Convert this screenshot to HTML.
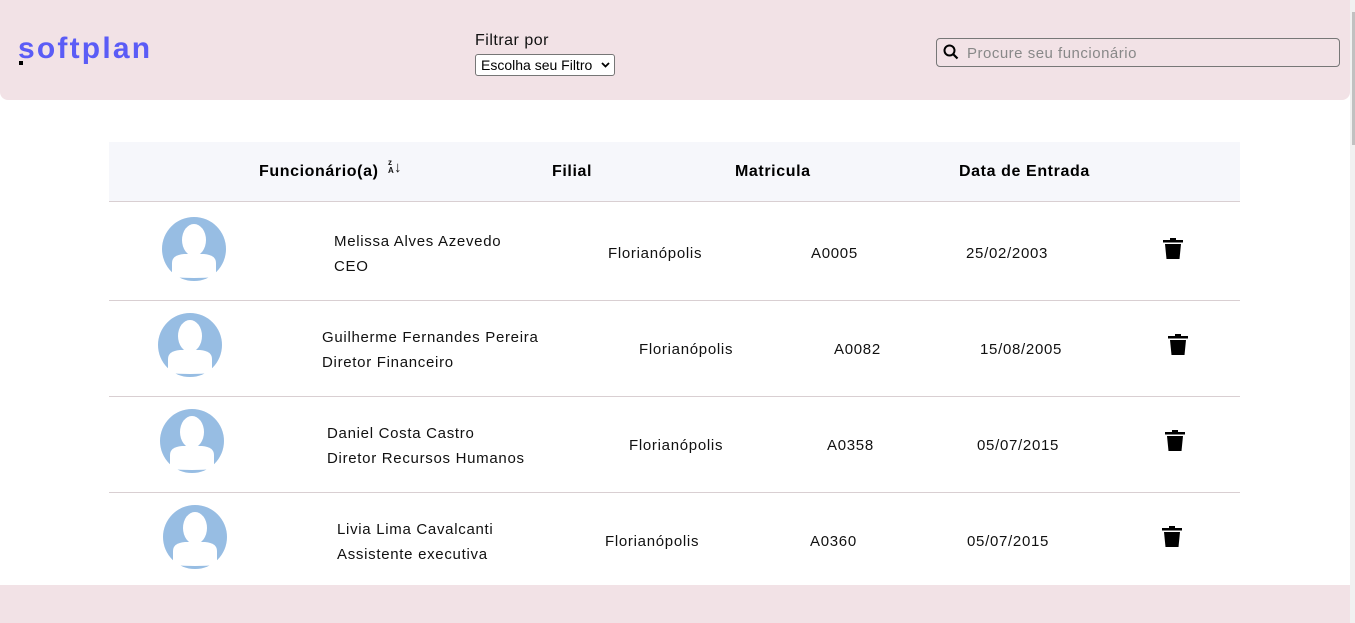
<!DOCTYPE html>
<html><head><meta charset="utf-8">
<style>
*{margin:0;padding:0;box-sizing:border-box}
body{width:1355px;height:623px;overflow:hidden;background:#fff;font-family:"Liberation Sans",Arial,sans-serif;position:relative;color:#111}
.a{position:absolute;white-space:nowrap}
.hdr{position:absolute;left:0;top:0;width:1350px;height:100px;background:#f2e2e6;border-radius:0 0 8px 8px}
.ftr{position:absolute;left:0;top:585px;width:1350px;height:38px;background:#f2e2e6}
.sb{position:absolute;left:1350px;top:0;width:5px;height:623px;background:#f1f1f1}
.th{position:absolute;left:1352px;top:12px;width:3px;height:133px;background:#c1c1c1}
.thead{position:absolute;left:109px;top:142px;width:1131px;height:60px;background:#f6f7fb;border-bottom:1px solid #d9cfd2}
.h{font-weight:bold;font-size:16px;top:163px;color:#000;letter-spacing:0.6px}
.line{position:absolute;left:109px;width:1131px;height:1px;background:#d9cfd2}
.t{font-size:15px;color:#111;letter-spacing:0.7px}
</style></head><body>
<div class="hdr"></div>
<div class="a" style="left:18px;top:32px;font-size:30px;font-weight:bold;color:#5b5cf6;letter-spacing:2.2px">softplan</div>
<div class="a" style="left:19px;top:61px;width:4px;height:4px;background:#000"></div>
<div class="a" style="left:475px;top:32px;font-size:16px;color:#111;letter-spacing:0.5px">Filtrar por</div>
<div class="a" style="left:475px;top:54px;width:140px;height:22px;background:#fff;border:1px solid #767676;border-radius:3px;font-size:14px;padding:2px 0 0 5px;color:#000">Escolha seu Filtro <svg style="position:absolute;right:4px;top:7px" width="9" height="6"><path d="M1 1l3.5 3.5L8 1" fill="none" stroke="#000" stroke-width="1.8"/></svg></div>
<div class="a" style="left:936px;top:38px;width:404px;height:29px;border:1px solid #777;border-radius:4px"></div>
<svg class="a" style="left:943px;top:44px" width="16" height="16" viewBox="0 0 16 16"><circle cx="6.5" cy="6.5" r="5" fill="none" stroke="#000" stroke-width="2"/><path d="M10 10l4.5 4.5" stroke="#000" stroke-width="2.2"/></svg>
<div class="a" style="left:967px;top:45px;font-size:15px;color:#888;letter-spacing:0.5px">Procure seu funcionário</div>

<div class="thead"></div>
<div class="a h" style="left:259px">Funcionário(a)</div>
<div class="a" style="left:388px;top:159px;font-size:8px;font-weight:bold;line-height:8px">z<br>A</div>
<div class="a" style="left:394px;top:159px;font-size:15px;font-weight:bold">↓</div>
<div class="a h" style="left:552px">Filial</div>
<div class="a h" style="left:735px">Matricula</div>
<div class="a h" style="left:959px">Data de Entrada</div>

<div class="line" style="top:300px"></div>
<div class="line" style="top:396px"></div>
<div class="line" style="top:492px"></div>
<div class="ftr"></div>

<svg width="0" height="0" style="position:absolute"><defs>
<g id="av"><circle cx="32" cy="32" r="32" fill="#97bde3"/><ellipse cx="32" cy="23" rx="12" ry="16" fill="#fff"/><path d="M10 60 L10 46 Q10 38 22 37 L42 37 Q54 38 54 46 L54 60 Q32 62 10 60Z" fill="#fff"/></g>
<g id="tr"><rect x="0" y="2" width="20" height="2.5" fill="#000"/><rect x="7" y="0" width="6" height="3" fill="#000"/><path d="M2 6 H18 L16.5 21 H3.5Z" fill="#000"/></g>
</defs></svg>

<svg class="a" style="left:162px;top:217px" width="64" height="64"><use href="#av"/></svg>
<div class="a t" style="left:334px;top:233px">Melissa Alves Azevedo</div>
<div class="a t" style="left:334px;top:258px">CEO</div>
<div class="a t" style="left:608px;top:245px">Florianópolis</div>
<div class="a t" style="left:811px;top:245px">A0005</div>
<div class="a t" style="left:966px;top:245px">25/02/2003</div>
<svg class="a" style="left:1163px;top:238px" width="20" height="22"><use href="#tr"/></svg>

<svg class="a" style="left:158px;top:313px" width="64" height="64"><use href="#av"/></svg>
<div class="a t" style="left:322px;top:329px">Guilherme Fernandes Pereira</div>
<div class="a t" style="left:322px;top:354px">Diretor Financeiro</div>
<div class="a t" style="left:639px;top:341px">Florianópolis</div>
<div class="a t" style="left:834px;top:341px">A0082</div>
<div class="a t" style="left:980px;top:341px">15/08/2005</div>
<svg class="a" style="left:1168px;top:334px" width="20" height="22"><use href="#tr"/></svg>

<svg class="a" style="left:160px;top:409px" width="64" height="64"><use href="#av"/></svg>
<div class="a t" style="left:327px;top:425px">Daniel Costa Castro</div>
<div class="a t" style="left:327px;top:450px">Diretor Recursos Humanos</div>
<div class="a t" style="left:629px;top:437px">Florianópolis</div>
<div class="a t" style="left:827px;top:437px">A0358</div>
<div class="a t" style="left:977px;top:437px">05/07/2015</div>
<svg class="a" style="left:1165px;top:430px" width="20" height="22"><use href="#tr"/></svg>

<svg class="a" style="left:163px;top:505px" width="64" height="64"><use href="#av"/></svg>
<div class="a t" style="left:337px;top:521px">Livia Lima Cavalcanti</div>
<div class="a t" style="left:337px;top:546px">Assistente executiva</div>
<div class="a t" style="left:605px;top:533px">Florianópolis</div>
<div class="a t" style="left:810px;top:533px">A0360</div>
<div class="a t" style="left:967px;top:533px">05/07/2015</div>
<svg class="a" style="left:1162px;top:526px" width="20" height="22"><use href="#tr"/></svg>

<div class="sb"></div><div class="th"></div>
</body></html>
